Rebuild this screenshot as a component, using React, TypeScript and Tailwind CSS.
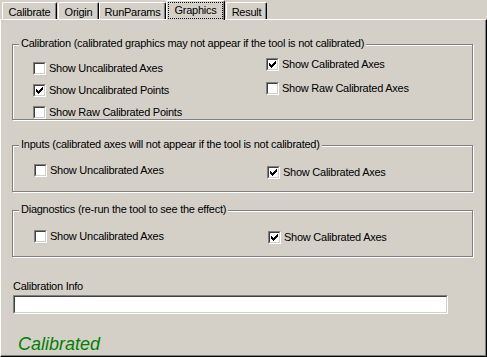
import React from "react";

function CheckBox({ checked }: { checked?: boolean }) {
  return (
    <span className="block w-[13px] h-[13px] shrink-0 border-t border-l border-t-[#808080] border-l-[#808080] border-b border-r border-b-white border-r-white">
      <span className="block w-[11px] h-[11px] border-t border-l border-t-[#404040] border-l-[#404040] border-b border-r border-b-[#d4d0c8] border-r-[#d4d0c8] bg-white">
        {checked && (
          <svg width="9" height="9" viewBox="0 0 9 9" className="block" shapeRendering="crispEdges">
            <rect x="7" y="1" width="1" height="1" fill="#000" />
            <rect x="6" y="2" width="2" height="1" fill="#000" />
            <rect x="1" y="3" width="1" height="1" fill="#000" />
            <rect x="5" y="3" width="3" height="1" fill="#000" />
            <rect x="1" y="4" width="2" height="1" fill="#000" />
            <rect x="4" y="4" width="3" height="1" fill="#000" />
            <rect x="1" y="5" width="5" height="1" fill="#000" />
            <rect x="2" y="6" width="3" height="1" fill="#000" />
            <rect x="3" y="7" width="1" height="1" fill="#000" />
          </svg>
        )}
      </span>
    </span>
  );
}

function Check({ label, checked }: { label: string; checked?: boolean }) {
  return (
    <div className="flex items-center h-[13px]">
      <CheckBox checked={checked} />
      <span className="ml-[3px] leading-[13px] whitespace-nowrap">{label}</span>
    </div>
  );
}

function Tab({ label, w, ml, selected }: { label: string; w: string; ml: string; selected?: boolean }) {
  if (selected) {
    return (
      <div
        className={`${w} ${ml} relative z-10 h-[20px] -mb-[1px] bg-[#d4d0c8] border-l border-t border-l-white border-t-white border-r border-r-black rounded-tl-[2px] rounded-tr-[2px] shadow-[inset_-1px_0_#808080] flex justify-center pt-[1px]`}
      >
        <span className="block w-[55px] h-[17px] border border-dotted border-black text-center leading-[14px]">
          {label}
        </span>
      </div>
    );
  }
  return (
    <div
      className={`${w} ${ml} h-[17px] border-l border-t border-l-white border-t-white border-r border-r-black rounded-tl-[2px] rounded-tr-[2px] shadow-[inset_-1px_0_#808080] text-center leading-[16px] pt-[1px]`}
    >
      {label}
    </div>
  );
}

function Group({
  title,
  h,
  mt,
  children,
}: {
  title: string;
  h: string;
  mt: string;
  children: React.ReactNode;
}) {
  return (
    <div
      className={`relative ${h} ${mt} ml-[11px] w-[461px] border border-[#808080] shadow-[inset_1px_1px_#fff,1px_1px_#fff]`}
    >
      <span className="absolute top-[-8px] left-[6px] px-[2px] bg-[#d4d0c8] leading-[13px] whitespace-nowrap">
        {title}
      </span>
      <div className="flex">{children}</div>
    </div>
  );
}

export default function App() {
  return (
    <div className="w-[487px] h-[357px] bg-[#d4d0c8] font-['Liberation_Sans',Arial,sans-serif] text-[11px] tracking-[-0.25px] text-black flex flex-col overflow-hidden">
      <div className="h-[19px] flex items-end shrink-0">
        <Tab label="Calibrate" w="w-[55px]" ml="ml-[2px]" />
        <Tab label="Origin" w="w-[41px]" ml="ml-[1px]" />
        <Tab label="RunParams" w="w-[67px]" ml="ml-0" />
        <Tab label="Graphics" w="w-[59px]" ml="ml-0" selected />
        <Tab label="Result" w="w-[41px]" ml="ml-[1px]" />
      </div>
      <div className="flex-1 flex flex-col border-l border-t border-l-white border-t-white border-r border-b border-r-black border-b-black shadow-[inset_-1px_-1px_#808080]">
        <Group title="Calibration (calibrated graphics may not appear if the tool is not calibrated)" h="h-[76px]" mt="mt-[24px]">
          <div className="w-[253px] pl-[20px] pt-[17px] flex flex-col gap-[9px]">
            <Check label="Show Uncalibrated Axes" />
            <Check label="Show Uncalibrated Points" checked />
            <Check label="Show Raw Calibrated Points" />
          </div>
          <div className="pt-[13px] flex flex-col gap-[11px]">
            <Check label="Show Calibrated Axes" checked />
            <Check label="Show Raw Calibrated Axes" />
          </div>
        </Group>
        <Group title="Inputs (calibrated axes will not appear if the tool is not calibrated)" h="h-[47px]" mt="mt-[25px]">
          <div className="w-[254px] pl-[21px] pt-[18px]">
            <Check label="Show Uncalibrated Axes" />
          </div>
          <div className="pt-[20px]">
            <Check label="Show Calibrated Axes" checked />
          </div>
        </Group>
        <Group title="Diagnostics (re-run the tool to see the effect)" h="h-[47px]" mt="mt-[18px]">
          <div className="w-[255px] pl-[21px] pt-[19px]">
            <Check label="Show Uncalibrated Axes" />
          </div>
          <div className="pt-[20px]">
            <Check label="Show Calibrated Axes" checked />
          </div>
        </Group>
        <div className="mt-[23px] ml-[12px] leading-[13px]">Calibration Info</div>
        <div className="mt-[2px] ml-[12px] w-[435px] h-[19px] border-t border-l border-t-[#808080] border-l-[#808080] border-b border-r border-b-white border-r-white">
          <div className="h-full border-t border-l border-t-[#404040] border-l-[#404040] border-b border-r border-b-[#d4d0c8] border-r-[#d4d0c8] bg-white" />
        </div>
        <div className="mt-[20px] ml-[17px] text-[18px] leading-[20px] tracking-normal italic text-[#008000]">Calibrated</div>
      </div>
    </div>
  );
}
